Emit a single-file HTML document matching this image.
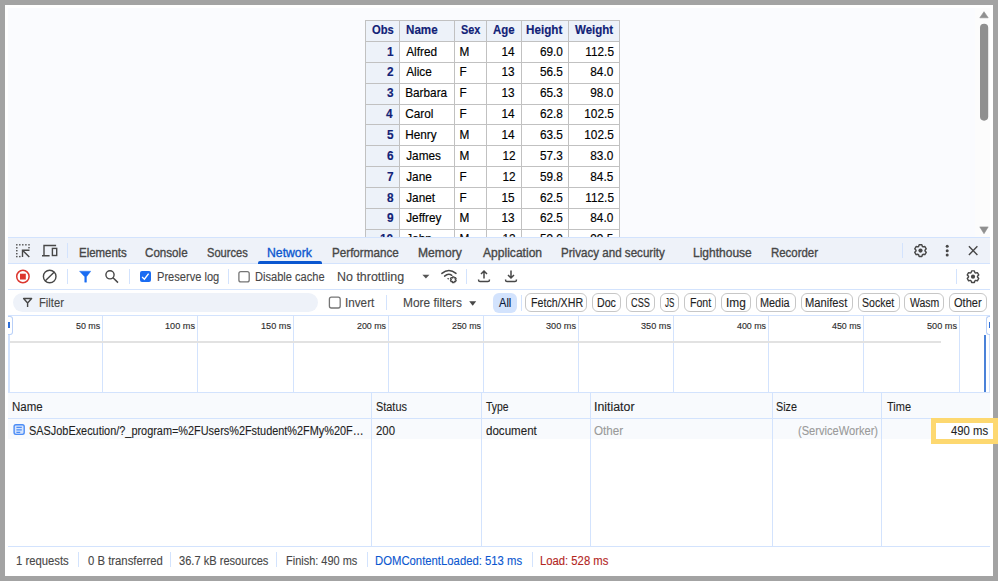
<!DOCTYPE html>
<html><head><meta charset="utf-8"><style>
html,body{margin:0;padding:0;}
body{width:998px;height:581px;position:relative;overflow:hidden;background:#a3a3a3;font-family:"Liberation Sans", sans-serif;}
body>div,body>span,body>svg{position:absolute;box-sizing:content-box;}
.t{white-space:nowrap;-webkit-text-stroke:0.12px currentColor;}
.tab{-webkit-text-stroke:0.35px currentColor;}
.s{-webkit-text-stroke:0.15px currentColor;}
.ic{overflow:visible;pointer-events:none;}
</style></head><body>
<div style="left:5px;top:5px;width:988px;height:571px;background:#fff"></div>
<div style="left:8px;top:8px;width:982px;height:229px;background:#fafbfe"></div>
<div style="left:975px;top:8px;width:15px;height:229px;background:#fcfcfc"></div>
<svg class="ic" width="998" height="581" viewBox="0 0 998 581" style="left:0;top:0"><path d="M979.8,17.8 L984,11.7 L988.2,17.8 Z" fill="#8f8f8f" stroke="#8f8f8f" stroke-width="0.6" stroke-linejoin="round"/><rect x="980" y="23.7" width="8.2" height="97" rx="4.1" fill="#8f8f8f"/><path d="M979.8,226.9 L988.2,226.9 L984,233.7 Z" fill="#8f8f8f" stroke="#8f8f8f" stroke-width="0.6" stroke-linejoin="round"/></svg>
<div style="left:365px;top:20px;width:254px;height:217px;background:#fff"></div>
<div style="left:365px;top:20px;width:254px;height:21px;background:#edf2f9"></div>
<div style="left:365px;top:41px;width:34px;height:196px;background:#edf2f9"></div>
<div style="left:365px;top:20px;width:1px;height:217px;background:#c1c1c1"></div>
<div style="left:399px;top:20px;width:1px;height:217px;background:#c1c1c1"></div>
<div style="left:454px;top:20px;width:1px;height:217px;background:#c1c1c1"></div>
<div style="left:486px;top:20px;width:1px;height:217px;background:#c1c1c1"></div>
<div style="left:521px;top:20px;width:1px;height:217px;background:#c1c1c1"></div>
<div style="left:568px;top:20px;width:1px;height:217px;background:#c1c1c1"></div>
<div style="left:619px;top:20px;width:1px;height:217px;background:#c1c1c1"></div>
<div style="left:365px;top:20px;width:255px;height:1px;background:#c1c1c1"></div>
<div style="left:365px;top:41px;width:255px;height:1px;background:#c1c1c1"></div>
<div style="left:365px;top:62px;width:255px;height:1px;background:#c1c1c1"></div>
<div style="left:365px;top:83px;width:255px;height:1px;background:#c1c1c1"></div>
<div style="left:365px;top:104px;width:255px;height:1px;background:#c1c1c1"></div>
<div style="left:365px;top:124px;width:255px;height:1px;background:#c1c1c1"></div>
<div style="left:365px;top:145px;width:255px;height:1px;background:#c1c1c1"></div>
<div style="left:365px;top:166px;width:255px;height:1px;background:#c1c1c1"></div>
<div style="left:365px;top:187px;width:255px;height:1px;background:#c1c1c1"></div>
<div style="left:365px;top:208px;width:255px;height:1px;background:#c1c1c1"></div>
<div style="left:365px;top:229px;width:255px;height:1px;background:#c1c1c1"></div>
<span class="t s" style="left:371.50px;top:25.21px;font-size:11.8px;line-height:11.8px;color:#112277;font-weight:bold;transform:scale(0.9478,1.1);transform-origin:0 9.99px;">Obs</span>
<span class="t s" style="left:405.62px;top:25.21px;font-size:11.8px;line-height:11.8px;color:#112277;font-weight:bold;transform:scale(0.9839,1.1);transform-origin:0 9.99px;">Name</span>
<span class="t s" style="left:461.00px;top:25.21px;font-size:11.8px;line-height:11.8px;color:#112277;font-weight:bold;transform:scale(0.9238,1.1);transform-origin:0 9.99px;">Sex</span>
<span class="t s" style="left:492.90px;top:25.21px;font-size:11.8px;line-height:11.8px;color:#112277;font-weight:bold;transform:scale(0.9682,1.1);transform-origin:0 9.99px;">Age</span>
<span class="t s" style="left:526.21px;top:25.21px;font-size:11.8px;line-height:11.8px;color:#112277;font-weight:bold;transform:scale(0.9889,1.1);transform-origin:0 9.99px;">Height</span>
<span class="t s" style="left:575.20px;top:25.21px;font-size:11.8px;line-height:11.8px;color:#112277;font-weight:bold;transform:scale(0.9744,1.1);transform-origin:0 9.99px;">Weight</span>
<span class="t s" style="left:387.00px;top:46.51px;font-size:11.8px;line-height:11.8px;color:#112277;font-weight:bold;transform:scale(1.0000,1.1);transform-origin:0 9.99px;">1</span>
<span class="t s" style="left:406.20px;top:46.51px;font-size:11.8px;line-height:11.8px;color:#000;font-weight:normal;transform:scale(1.0000,1.1);transform-origin:0 9.99px;">Alfred</span>
<span class="t s" style="left:459.60px;top:46.51px;font-size:11.8px;line-height:11.8px;color:#000;font-weight:normal;transform:scale(1.0000,1.1);transform-origin:0 9.99px;">M</span>
<span class="t s" style="left:501.40px;top:46.51px;font-size:11.8px;line-height:11.8px;color:#000;font-weight:normal;transform:scale(1.0000,1.1);transform-origin:0 9.99px;">14</span>
<span class="t s" style="left:539.90px;top:46.51px;font-size:11.8px;line-height:11.8px;color:#000;font-weight:normal;transform:scale(1.0000,1.1);transform-origin:0 9.99px;">69.0</span>
<span class="t s" style="left:585.30px;top:46.51px;font-size:11.8px;line-height:11.8px;color:#000;font-weight:normal;transform:scale(1.0000,1.1);transform-origin:0 9.99px;">112.5</span>
<span class="t s" style="left:387.00px;top:67.38px;font-size:11.8px;line-height:11.8px;color:#112277;font-weight:bold;transform:scale(1.0000,1.1);transform-origin:0 9.99px;">2</span>
<span class="t s" style="left:406.20px;top:67.38px;font-size:11.8px;line-height:11.8px;color:#000;font-weight:normal;transform:scale(1.0000,1.1);transform-origin:0 9.99px;">Alice</span>
<span class="t s" style="left:459.60px;top:67.38px;font-size:11.8px;line-height:11.8px;color:#000;font-weight:normal;transform:scale(1.0000,1.1);transform-origin:0 9.99px;">F</span>
<span class="t s" style="left:501.40px;top:67.38px;font-size:11.8px;line-height:11.8px;color:#000;font-weight:normal;transform:scale(1.0000,1.1);transform-origin:0 9.99px;">13</span>
<span class="t s" style="left:539.90px;top:67.38px;font-size:11.8px;line-height:11.8px;color:#000;font-weight:normal;transform:scale(1.0000,1.1);transform-origin:0 9.99px;">56.5</span>
<span class="t s" style="left:590.30px;top:67.38px;font-size:11.8px;line-height:11.8px;color:#000;font-weight:normal;transform:scale(1.0000,1.1);transform-origin:0 9.99px;">84.0</span>
<span class="t s" style="left:387.00px;top:88.25px;font-size:11.8px;line-height:11.8px;color:#112277;font-weight:bold;transform:scale(1.0000,1.1);transform-origin:0 9.99px;">3</span>
<span class="t s" style="left:405.20px;top:88.25px;font-size:11.8px;line-height:11.8px;color:#000;font-weight:normal;transform:scale(1.0000,1.1);transform-origin:0 9.99px;">Barbara</span>
<span class="t s" style="left:459.60px;top:88.25px;font-size:11.8px;line-height:11.8px;color:#000;font-weight:normal;transform:scale(1.0000,1.1);transform-origin:0 9.99px;">F</span>
<span class="t s" style="left:501.40px;top:88.25px;font-size:11.8px;line-height:11.8px;color:#000;font-weight:normal;transform:scale(1.0000,1.1);transform-origin:0 9.99px;">13</span>
<span class="t s" style="left:539.90px;top:88.25px;font-size:11.8px;line-height:11.8px;color:#000;font-weight:normal;transform:scale(1.0000,1.1);transform-origin:0 9.99px;">65.3</span>
<span class="t s" style="left:590.30px;top:88.25px;font-size:11.8px;line-height:11.8px;color:#000;font-weight:normal;transform:scale(1.0000,1.1);transform-origin:0 9.99px;">98.0</span>
<span class="t s" style="left:386.00px;top:109.12px;font-size:11.8px;line-height:11.8px;color:#112277;font-weight:bold;transform:scale(1.0000,1.1);transform-origin:0 9.99px;">4</span>
<span class="t s" style="left:405.20px;top:109.12px;font-size:11.8px;line-height:11.8px;color:#000;font-weight:normal;transform:scale(1.0000,1.1);transform-origin:0 9.99px;">Carol</span>
<span class="t s" style="left:459.60px;top:109.12px;font-size:11.8px;line-height:11.8px;color:#000;font-weight:normal;transform:scale(1.0000,1.1);transform-origin:0 9.99px;">F</span>
<span class="t s" style="left:501.40px;top:109.12px;font-size:11.8px;line-height:11.8px;color:#000;font-weight:normal;transform:scale(1.0000,1.1);transform-origin:0 9.99px;">14</span>
<span class="t s" style="left:539.90px;top:109.12px;font-size:11.8px;line-height:11.8px;color:#000;font-weight:normal;transform:scale(1.0000,1.1);transform-origin:0 9.99px;">62.8</span>
<span class="t s" style="left:584.30px;top:109.12px;font-size:11.8px;line-height:11.8px;color:#000;font-weight:normal;transform:scale(1.0000,1.1);transform-origin:0 9.99px;">102.5</span>
<span class="t s" style="left:387.00px;top:129.99px;font-size:11.8px;line-height:11.8px;color:#112277;font-weight:bold;transform:scale(1.0000,1.1);transform-origin:0 9.99px;">5</span>
<span class="t s" style="left:405.20px;top:129.99px;font-size:11.8px;line-height:11.8px;color:#000;font-weight:normal;transform:scale(1.0000,1.1);transform-origin:0 9.99px;">Henry</span>
<span class="t s" style="left:459.60px;top:129.99px;font-size:11.8px;line-height:11.8px;color:#000;font-weight:normal;transform:scale(1.0000,1.1);transform-origin:0 9.99px;">M</span>
<span class="t s" style="left:501.40px;top:129.99px;font-size:11.8px;line-height:11.8px;color:#000;font-weight:normal;transform:scale(1.0000,1.1);transform-origin:0 9.99px;">14</span>
<span class="t s" style="left:539.90px;top:129.99px;font-size:11.8px;line-height:11.8px;color:#000;font-weight:normal;transform:scale(1.0000,1.1);transform-origin:0 9.99px;">63.5</span>
<span class="t s" style="left:584.30px;top:129.99px;font-size:11.8px;line-height:11.8px;color:#000;font-weight:normal;transform:scale(1.0000,1.1);transform-origin:0 9.99px;">102.5</span>
<span class="t s" style="left:387.00px;top:150.86px;font-size:11.8px;line-height:11.8px;color:#112277;font-weight:bold;transform:scale(1.0000,1.1);transform-origin:0 9.99px;">6</span>
<span class="t s" style="left:406.20px;top:150.86px;font-size:11.8px;line-height:11.8px;color:#000;font-weight:normal;transform:scale(1.0000,1.1);transform-origin:0 9.99px;">James</span>
<span class="t s" style="left:459.60px;top:150.86px;font-size:11.8px;line-height:11.8px;color:#000;font-weight:normal;transform:scale(1.0000,1.1);transform-origin:0 9.99px;">M</span>
<span class="t s" style="left:502.40px;top:150.86px;font-size:11.8px;line-height:11.8px;color:#000;font-weight:normal;transform:scale(1.0000,1.1);transform-origin:0 9.99px;">12</span>
<span class="t s" style="left:539.90px;top:150.86px;font-size:11.8px;line-height:11.8px;color:#000;font-weight:normal;transform:scale(1.0000,1.1);transform-origin:0 9.99px;">57.3</span>
<span class="t s" style="left:590.30px;top:150.86px;font-size:11.8px;line-height:11.8px;color:#000;font-weight:normal;transform:scale(1.0000,1.1);transform-origin:0 9.99px;">83.0</span>
<span class="t s" style="left:387.00px;top:171.73px;font-size:11.8px;line-height:11.8px;color:#112277;font-weight:bold;transform:scale(1.0000,1.1);transform-origin:0 9.99px;">7</span>
<span class="t s" style="left:406.20px;top:171.73px;font-size:11.8px;line-height:11.8px;color:#000;font-weight:normal;transform:scale(1.0000,1.1);transform-origin:0 9.99px;">Jane</span>
<span class="t s" style="left:459.60px;top:171.73px;font-size:11.8px;line-height:11.8px;color:#000;font-weight:normal;transform:scale(1.0000,1.1);transform-origin:0 9.99px;">F</span>
<span class="t s" style="left:502.40px;top:171.73px;font-size:11.8px;line-height:11.8px;color:#000;font-weight:normal;transform:scale(1.0000,1.1);transform-origin:0 9.99px;">12</span>
<span class="t s" style="left:539.90px;top:171.73px;font-size:11.8px;line-height:11.8px;color:#000;font-weight:normal;transform:scale(1.0000,1.1);transform-origin:0 9.99px;">59.8</span>
<span class="t s" style="left:590.30px;top:171.73px;font-size:11.8px;line-height:11.8px;color:#000;font-weight:normal;transform:scale(1.0000,1.1);transform-origin:0 9.99px;">84.5</span>
<span class="t s" style="left:387.00px;top:192.60px;font-size:11.8px;line-height:11.8px;color:#112277;font-weight:bold;transform:scale(1.0000,1.1);transform-origin:0 9.99px;">8</span>
<span class="t s" style="left:406.20px;top:192.60px;font-size:11.8px;line-height:11.8px;color:#000;font-weight:normal;transform:scale(1.0000,1.1);transform-origin:0 9.99px;">Janet</span>
<span class="t s" style="left:459.60px;top:192.60px;font-size:11.8px;line-height:11.8px;color:#000;font-weight:normal;transform:scale(1.0000,1.1);transform-origin:0 9.99px;">F</span>
<span class="t s" style="left:501.40px;top:192.60px;font-size:11.8px;line-height:11.8px;color:#000;font-weight:normal;transform:scale(1.0000,1.1);transform-origin:0 9.99px;">15</span>
<span class="t s" style="left:539.90px;top:192.60px;font-size:11.8px;line-height:11.8px;color:#000;font-weight:normal;transform:scale(1.0000,1.1);transform-origin:0 9.99px;">62.5</span>
<span class="t s" style="left:585.30px;top:192.60px;font-size:11.8px;line-height:11.8px;color:#000;font-weight:normal;transform:scale(1.0000,1.1);transform-origin:0 9.99px;">112.5</span>
<span class="t s" style="left:387.00px;top:213.47px;font-size:11.8px;line-height:11.8px;color:#112277;font-weight:bold;transform:scale(1.0000,1.1);transform-origin:0 9.99px;">9</span>
<span class="t s" style="left:406.20px;top:213.47px;font-size:11.8px;line-height:11.8px;color:#000;font-weight:normal;transform:scale(1.0000,1.1);transform-origin:0 9.99px;">Jeffrey</span>
<span class="t s" style="left:459.60px;top:213.47px;font-size:11.8px;line-height:11.8px;color:#000;font-weight:normal;transform:scale(1.0000,1.1);transform-origin:0 9.99px;">M</span>
<span class="t s" style="left:501.40px;top:213.47px;font-size:11.8px;line-height:11.8px;color:#000;font-weight:normal;transform:scale(1.0000,1.1);transform-origin:0 9.99px;">13</span>
<span class="t s" style="left:539.90px;top:213.47px;font-size:11.8px;line-height:11.8px;color:#000;font-weight:normal;transform:scale(1.0000,1.1);transform-origin:0 9.99px;">62.5</span>
<span class="t s" style="left:590.30px;top:213.47px;font-size:11.8px;line-height:11.8px;color:#000;font-weight:normal;transform:scale(1.0000,1.1);transform-origin:0 9.99px;">84.0</span>
<span class="t s" style="left:380.00px;top:234.34px;font-size:11.8px;line-height:11.8px;color:#112277;font-weight:bold;transform:scale(1.0000,1.1);transform-origin:0 9.99px;">10</span>
<span class="t s" style="left:406.20px;top:234.34px;font-size:11.8px;line-height:11.8px;color:#000;font-weight:normal;transform:scale(1.0000,1.1);transform-origin:0 9.99px;">John</span>
<span class="t s" style="left:459.60px;top:234.34px;font-size:11.8px;line-height:11.8px;color:#000;font-weight:normal;transform:scale(1.0000,1.1);transform-origin:0 9.99px;">M</span>
<span class="t s" style="left:502.40px;top:234.34px;font-size:11.8px;line-height:11.8px;color:#000;font-weight:normal;transform:scale(1.0000,1.1);transform-origin:0 9.99px;">12</span>
<span class="t s" style="left:539.90px;top:234.34px;font-size:11.8px;line-height:11.8px;color:#000;font-weight:normal;transform:scale(1.0000,1.1);transform-origin:0 9.99px;">59.0</span>
<span class="t s" style="left:590.30px;top:234.34px;font-size:11.8px;line-height:11.8px;color:#000;font-weight:normal;transform:scale(1.0000,1.1);transform-origin:0 9.99px;">99.5</span>
<div style="left:8px;top:237px;width:982px;height:336px;background:#fff"></div>
<div style="left:8px;top:237px;width:982px;height:1px;background:#d3e3fd"></div>
<div style="left:8px;top:238px;width:982px;height:25px;background:#eef2f9"></div>
<div style="left:8px;top:263px;width:982px;height:1px;background:#d3e3fd"></div>
<span class="t tab" style="left:78.69px;top:246.53px;font-size:12.6px;line-height:12.6px;color:#474747;font-weight:normal;transform:scale(0.9098,1.0);transform-origin:0 10.67px;">Elements</span>
<span class="t tab" style="left:145.38px;top:246.53px;font-size:12.6px;line-height:12.6px;color:#474747;font-weight:normal;transform:scale(0.9222,1.0);transform-origin:0 10.67px;">Console</span>
<span class="t tab" style="left:207.12px;top:246.53px;font-size:12.6px;line-height:12.6px;color:#474747;font-weight:normal;transform:scale(0.8822,1.0);transform-origin:0 10.67px;">Sources</span>
<span class="t tab" style="left:331.57px;top:246.53px;font-size:12.6px;line-height:12.6px;color:#474747;font-weight:normal;transform:scale(0.9254,1.0);transform-origin:0 10.67px;">Performance</span>
<span class="t tab" style="left:417.64px;top:246.53px;font-size:12.6px;line-height:12.6px;color:#474747;font-weight:normal;transform:scale(0.9622,1.0);transform-origin:0 10.67px;">Memory</span>
<span class="t tab" style="left:482.80px;top:246.53px;font-size:12.6px;line-height:12.6px;color:#474747;font-weight:normal;transform:scale(0.9590,1.0);transform-origin:0 10.67px;">Application</span>
<span class="t tab" style="left:560.88px;top:246.53px;font-size:12.6px;line-height:12.6px;color:#474747;font-weight:normal;transform:scale(0.9214,1.0);transform-origin:0 10.67px;">Privacy and security</span>
<span class="t tab" style="left:693.05px;top:246.53px;font-size:12.6px;line-height:12.6px;color:#474747;font-weight:normal;transform:scale(0.9533,1.0);transform-origin:0 10.67px;">Lighthouse</span>
<span class="t tab" style="left:770.79px;top:246.53px;font-size:12.6px;line-height:12.6px;color:#474747;font-weight:normal;transform:scale(0.9078,1.0);transform-origin:0 10.67px;">Recorder</span>
<span class="t tab" style="left:267.43px;top:246.53px;font-size:12.6px;line-height:12.6px;color:#0b57d0;font-weight:normal;transform:scale(0.9711,1.0);transform-origin:0 10.67px;">Network</span>
<div style="left:258px;top:260.5px;width:64px;height:3px;background:#0b57d0;border-radius:2px 2px 0 0"></div>
<div style="left:67px;top:243px;width:1px;height:15px;background:#d3e3fd"></div>
<div style="left:902px;top:243px;width:1px;height:15px;background:#d3e3fd"></div>
<svg class="ic" width="998" height="581" viewBox="0 0 998 581" style="left:0;top:0"><rect x="16.10" y="244.10" width="1.4" height="1.4" fill="#474747"/><rect x="19.10" y="244.10" width="1.4" height="1.4" fill="#474747"/><rect x="22.10" y="244.10" width="1.4" height="1.4" fill="#474747"/><rect x="25.20" y="244.10" width="1.4" height="1.4" fill="#474747"/><rect x="28.30" y="244.10" width="1.4" height="1.4" fill="#474747"/><rect x="16.10" y="247.10" width="1.4" height="1.4" fill="#474747"/><rect x="16.10" y="250.00" width="1.4" height="1.4" fill="#474747"/><rect x="16.10" y="253.00" width="1.4" height="1.4" fill="#474747"/><rect x="16.10" y="255.90" width="1.4" height="1.4" fill="#474747"/><rect x="19.10" y="255.90" width="1.4" height="1.4" fill="#474747"/><rect x="28.30" y="247.00" width="1.4" height="1.4" fill="#474747"/><path d="M29.5,250.3 H22.5 V257 M22.5,250.3 L29.3,257" fill="none" stroke="#474747" stroke-width="1.4"/><path d="M56.1,245.5 H44 V255.7 M42,255.7 H49.6" fill="none" stroke="#474747" stroke-width="1.4"/><rect x="52.4" y="248.4" width="4.3" height="7.1" fill="none" stroke="#474747" stroke-width="1.4"/><path d="M922.75,246.70 L922.40,246.52 L921.85,244.75 L919.15,244.75 L918.60,246.52 L918.25,246.70 L917.92,246.91 L916.11,246.51 L914.76,248.85 L916.02,250.21 L916.00,250.60 L916.02,250.99 L914.76,252.35 L916.11,254.69 L917.92,254.29 L918.25,254.50 L918.60,254.68 L919.15,256.45 L921.85,256.45 L922.40,254.68 L922.75,254.50 L923.08,254.29 L924.89,254.69 L926.24,252.35 L924.98,250.99 L925.00,250.60 L924.98,250.21 L926.24,248.85 L924.89,246.51 L923.08,246.91 Z" fill="none" stroke="#474747" stroke-width="1.4" stroke-linejoin="round"/><circle cx="920.5" cy="250.6" r="2.1" fill="#474747"/><circle cx="947.2" cy="246.3" r="1.5" fill="#474747"/><circle cx="947.2" cy="250.7" r="1.5" fill="#474747"/><circle cx="947.2" cy="255.1" r="1.5" fill="#474747"/><path d="M968.9,246.3 L977.4,254.9 M977.4,246.3 L968.9,254.9" stroke="#474747" stroke-width="1.4"/></svg>
<div style="left:8px;top:289px;width:982px;height:1px;background:#d3e3fd"></div>
<div style="left:67px;top:269px;width:1px;height:15px;background:#d3e3fd"></div>
<div style="left:129px;top:269px;width:1px;height:15px;background:#d3e3fd"></div>
<div style="left:228px;top:269px;width:1px;height:15px;background:#d3e3fd"></div>
<div style="left:466px;top:269px;width:1px;height:15px;background:#d3e3fd"></div>
<div style="left:956px;top:269px;width:1px;height:15px;background:#d3e3fd"></div>
<svg class="ic" width="998" height="581" viewBox="0 0 998 581" style="left:0;top:0"><circle cx="22.9" cy="276.5" r="6.2" fill="none" stroke="#dc362e" stroke-width="1.5"/><rect x="20" y="273.7" width="5.8" height="5.8" fill="#dc362e"/><circle cx="49.7" cy="276.5" r="6.3" fill="none" stroke="#474747" stroke-width="1.4"/><path d="M54.3,271.9 L45.1,281.1" stroke="#474747" stroke-width="1.4"/><path d="M79.5,271.2 H90.8 L86.5,276.8 V282.2 H84.7 V276.8 Z" fill="#1a6cf2" stroke="#1a6cf2" stroke-width="0.4" stroke-linejoin="round"/><circle cx="110" cy="274.8" r="4.1" fill="none" stroke="#474747" stroke-width="1.4"/><path d="M113,277.8 L118,282.6" stroke="#474747" stroke-width="1.5"/><rect x="140" y="271" width="11" height="11" rx="2" fill="#1a6cf2"/><path d="M142.1,277.1 L144.4,279.2 L148.6,273.6" fill="none" stroke="#fff" stroke-width="1.4"/><rect x="238.9" y="271.6" width="10.3" height="10.3" rx="2" fill="#fff" stroke="#757575" stroke-width="1.3"/><path d="M422.4,274.7 H429.4 L425.9,278.4 Z" fill="#555"/><path d="M441.9,273.4 Q448.9,267.6 456,273.4" fill="none" stroke="#474747" stroke-width="1.5" stroke-linecap="round"/><path d="M444.6,276.1 Q448.3,272.9 451.8,275.3" fill="none" stroke="#474747" stroke-width="1.5" stroke-linecap="round"/><path d="M447.2,278 L449,278 L448.2,280 Z" fill="#474747"/><path d="M454.30,277.97 L454.18,277.90 L454.03,276.79 L452.57,276.79 L452.42,277.90 L452.30,277.97 L452.18,278.04 L451.14,277.62 L450.42,278.87 L451.30,279.56 L451.30,279.70 L451.30,279.84 L450.42,280.53 L451.14,281.78 L452.18,281.36 L452.30,281.43 L452.42,281.50 L452.57,282.61 L454.03,282.61 L454.18,281.50 L454.30,281.43 L454.42,281.36 L455.46,281.78 L456.18,280.53 L455.30,279.84 L455.30,279.70 L455.30,279.56 L456.18,278.87 L455.46,277.62 L454.42,278.04 Z" fill="none" stroke="#474747" stroke-width="1.25" stroke-linejoin="round"/><path d="M484,278.5 V271.5 M481,274 L484,271 L487,274" fill="none" stroke="#474747" stroke-width="1.5"/><path d="M478.6,279.4 V280.2 Q478.6,281.6 480,281.6 H488 Q489.4,281.6 489.4,280.2 V279.4" fill="none" stroke="#474747" stroke-width="1.5"/><path d="M511,270.5 V277.5 M508,275 L511,278 L514,275" fill="none" stroke="#474747" stroke-width="1.5"/><path d="M505.6,279.4 V280.2 Q505.6,281.6 507,281.6 H515 Q516.4,281.6 516.4,280.2 V279.4" fill="none" stroke="#474747" stroke-width="1.5"/><path d="M975.25,272.80 L974.90,272.62 L974.35,270.85 L971.65,270.85 L971.10,272.62 L970.75,272.80 L970.42,273.01 L968.61,272.61 L967.26,274.95 L968.52,276.31 L968.50,276.70 L968.52,277.09 L967.26,278.45 L968.61,280.79 L970.42,280.39 L970.75,280.60 L971.10,280.78 L971.65,282.55 L974.35,282.55 L974.90,280.78 L975.25,280.60 L975.58,280.39 L977.39,280.79 L978.74,278.45 L977.48,277.09 L977.50,276.70 L977.48,276.31 L978.74,274.95 L977.39,272.61 L975.58,273.01 Z" fill="none" stroke="#474747" stroke-width="1.4" stroke-linejoin="round"/><circle cx="973" cy="276.7" r="2.1" fill="#474747"/></svg>
<span class="t" style="left:156.58px;top:271.44px;font-size:12px;line-height:12px;color:#474747;font-weight:normal;transform:scale(0.9242,1.0);transform-origin:0 10.16px;">Preserve log</span>
<span class="t" style="left:254.78px;top:271.44px;font-size:12px;line-height:12px;color:#474747;font-weight:normal;transform:scale(0.9243,1.0);transform-origin:0 10.16px;">Disable cache</span>
<span class="t" style="left:336.56px;top:271.44px;font-size:12px;line-height:12px;color:#474747;font-weight:normal;transform:scale(1.0381,1.0);transform-origin:0 10.16px;">No throttling</span>
<div style="left:8px;top:315px;width:982px;height:1px;background:#d3e3fd"></div>
<div style="left:12.7px;top:292.8px;width:305px;height:19.2px;background:#eef2f9;border-radius:10px"></div>
<svg class="ic" width="998" height="581" viewBox="0 0 998 581" style="left:0;top:0"><path d="M23.6,298.5 H31.6 L27.6,303 Z M27.6,303 V307" fill="none" stroke="#474747" stroke-width="1.4" stroke-linejoin="round"/><rect x="329.4" y="297.2" width="10.8" height="10.8" rx="2" fill="#fff" stroke="#757575" stroke-width="1.3"/><path d="M469.2,301.2 H476.2 L472.7,305.8 Z" fill="#474747"/></svg>
<span class="t" style="left:38.77px;top:297.24px;font-size:12px;line-height:12px;color:#474747;font-weight:normal;transform:scale(0.9346,1.0);transform-origin:0 10.16px;">Filter</span>
<span class="t" style="left:345.42px;top:297.24px;font-size:12px;line-height:12px;color:#474747;font-weight:normal;transform:scale(0.9759,1.0);transform-origin:0 10.16px;">Invert</span>
<div style="left:386px;top:295px;width:1px;height:15px;background:#d3e3fd"></div>
<span class="t" style="left:403.01px;top:297.24px;font-size:12px;line-height:12px;color:#474747;font-weight:normal;transform:scale(0.9931,1.0);transform-origin:0 10.16px;">More filters</span>
<div style="left:493px;top:293px;width:23.5px;height:20px;background:#d3e3fd;border-radius:6px"></div>
<span class="t" style="left:498.50px;top:297.24px;font-size:12px;line-height:12px;color:#0a1a3a;font-weight:normal;transform:scale(0.9231,1.0);transform-origin:0 10.16px;">All</span>
<div style="left:521px;top:295px;width:1px;height:16px;background:#d3e3fd"></div>
<div style="left:525.4px;top:293.3px;width:60.0px;height:17.2px;border:1px solid #c7c7c7;border-radius:6px;background:#fff"></div>
<span class="t" style="left:530.51px;top:297.24px;font-size:12px;line-height:12px;color:#1f1f1f;font-weight:normal;transform:scale(0.8877,1.0);transform-origin:0 10.16px;">Fetch/XHR</span>
<div style="left:591.8px;top:293.3px;width:27.2px;height:17.2px;border:1px solid #c7c7c7;border-radius:6px;background:#fff"></div>
<span class="t" style="left:596.72px;top:297.24px;font-size:12px;line-height:12px;color:#1f1f1f;font-weight:normal;transform:scale(0.8850,1.0);transform-origin:0 10.16px;">Doc</span>
<div style="left:626.2px;top:293.3px;width:26.7px;height:17.2px;border:1px solid #c7c7c7;border-radius:6px;background:#fff"></div>
<span class="t" style="left:630.63px;top:297.24px;font-size:12px;line-height:12px;color:#1f1f1f;font-weight:normal;transform:scale(0.7652,1.0);transform-origin:0 10.16px;">CSS</span>
<div style="left:660.3px;top:293.3px;width:16.7px;height:17.2px;border:1px solid #c7c7c7;border-radius:6px;background:#fff"></div>
<span class="t" style="left:664.80px;top:297.24px;font-size:12px;line-height:12px;color:#1f1f1f;font-weight:normal;transform:scale(0.6714,1.0);transform-origin:0 10.16px;">JS</span>
<div style="left:684.3px;top:293.3px;width:30.1px;height:17.2px;border:1px solid #c7c7c7;border-radius:6px;background:#fff"></div>
<span class="t" style="left:689.72px;top:297.24px;font-size:12px;line-height:12px;color:#1f1f1f;font-weight:normal;transform:scale(0.8826,1.0);transform-origin:0 10.16px;">Font</span>
<div style="left:721.2px;top:293.3px;width:27.4px;height:17.2px;border:1px solid #c7c7c7;border-radius:6px;background:#fff"></div>
<span class="t" style="left:726.11px;top:297.24px;font-size:12px;line-height:12px;color:#1f1f1f;font-weight:normal;transform:scale(0.9889,1.0);transform-origin:0 10.16px;">Img</span>
<div style="left:755.7px;top:293.3px;width:38.1px;height:17.2px;border:1px solid #c7c7c7;border-radius:6px;background:#fff"></div>
<span class="t" style="left:760.09px;top:297.24px;font-size:12px;line-height:12px;color:#1f1f1f;font-weight:normal;transform:scale(0.9062,1.0);transform-origin:0 10.16px;">Media</span>
<div style="left:800.6px;top:293.3px;width:50.4px;height:17.2px;border:1px solid #c7c7c7;border-radius:6px;background:#fff"></div>
<span class="t" style="left:805.37px;top:297.24px;font-size:12px;line-height:12px;color:#1f1f1f;font-weight:normal;transform:scale(0.9318,1.0);transform-origin:0 10.16px;">Manifest</span>
<div style="left:858.1px;top:293.3px;width:39.5px;height:17.2px;border:1px solid #c7c7c7;border-radius:6px;background:#fff"></div>
<span class="t" style="left:862.02px;top:297.24px;font-size:12px;line-height:12px;color:#1f1f1f;font-weight:normal;transform:scale(0.8778,1.0);transform-origin:0 10.16px;">Socket</span>
<div style="left:904.4px;top:293.3px;width:37.3px;height:17.2px;border:1px solid #c7c7c7;border-radius:6px;background:#fff"></div>
<span class="t" style="left:910.30px;top:297.24px;font-size:12px;line-height:12px;color:#1f1f1f;font-weight:normal;transform:scale(0.8727,1.0);transform-origin:0 10.16px;">Wasm</span>
<div style="left:948.6px;top:293.3px;width:36.3px;height:17.2px;border:1px solid #c7c7c7;border-radius:6px;background:#fff"></div>
<span class="t" style="left:953.88px;top:297.24px;font-size:12px;line-height:12px;color:#1f1f1f;font-weight:normal;transform:scale(0.9207,1.0);transform-origin:0 10.16px;">Other</span>
<div style="left:8px;top:392px;width:982px;height:1px;background:#d3e3fd"></div>
<div style="left:102px;top:316px;width:1px;height:76px;background:#d3e3fd"></div>
<div style="left:197px;top:316px;width:1px;height:76px;background:#d3e3fd"></div>
<div style="left:293px;top:316px;width:1px;height:76px;background:#d3e3fd"></div>
<div style="left:388px;top:316px;width:1px;height:76px;background:#d3e3fd"></div>
<div style="left:483px;top:316px;width:1px;height:76px;background:#d3e3fd"></div>
<div style="left:578px;top:316px;width:1px;height:76px;background:#d3e3fd"></div>
<div style="left:673px;top:316px;width:1px;height:76px;background:#d3e3fd"></div>
<div style="left:768px;top:316px;width:1px;height:76px;background:#d3e3fd"></div>
<div style="left:863px;top:316px;width:1px;height:76px;background:#d3e3fd"></div>
<div style="left:959px;top:316px;width:1px;height:76px;background:#d3e3fd"></div>
<div style="left:8px;top:316px;width:1.5px;height:76px;background:#d3e3fd"></div>
<div style="left:989px;top:316px;width:1px;height:76px;background:#d3e3fd"></div>
<span class="t s" style="left:75.56px;top:320.96px;font-size:9.5px;line-height:9.5px;color:#303030;font-weight:normal;transform:scale(0.9360,1.0);transform-origin:0 8.04px;">50 ms</span>
<span class="t s" style="left:165.04px;top:320.96px;font-size:9.5px;line-height:9.5px;color:#303030;font-weight:normal;transform:scale(0.9633,1.0);transform-origin:0 8.04px;">100 ms</span>
<span class="t s" style="left:261.04px;top:320.96px;font-size:9.5px;line-height:9.5px;color:#303030;font-weight:normal;transform:scale(0.9633,1.0);transform-origin:0 8.04px;">150 ms</span>
<span class="t s" style="left:357.00px;top:320.96px;font-size:9.5px;line-height:9.5px;color:#303030;font-weight:normal;transform:scale(0.9323,1.0);transform-origin:0 8.04px;">200 ms</span>
<span class="t s" style="left:452.00px;top:320.96px;font-size:9.5px;line-height:9.5px;color:#303030;font-weight:normal;transform:scale(0.9323,1.0);transform-origin:0 8.04px;">250 ms</span>
<span class="t s" style="left:546.04px;top:320.96px;font-size:9.5px;line-height:9.5px;color:#303030;font-weight:normal;transform:scale(0.9633,1.0);transform-origin:0 8.04px;">300 ms</span>
<span class="t s" style="left:641.04px;top:320.96px;font-size:9.5px;line-height:9.5px;color:#303030;font-weight:normal;transform:scale(0.9633,1.0);transform-origin:0 8.04px;">350 ms</span>
<span class="t s" style="left:737.00px;top:320.96px;font-size:9.5px;line-height:9.5px;color:#303030;font-weight:normal;transform:scale(0.9323,1.0);transform-origin:0 8.04px;">400 ms</span>
<span class="t s" style="left:832.00px;top:320.96px;font-size:9.5px;line-height:9.5px;color:#303030;font-weight:normal;transform:scale(0.9323,1.0);transform-origin:0 8.04px;">450 ms</span>
<span class="t s" style="left:927.04px;top:320.96px;font-size:9.5px;line-height:9.5px;color:#303030;font-weight:normal;transform:scale(0.9633,1.0);transform-origin:0 8.04px;">500 ms</span>
<div style="left:10px;top:340.5px;width:931px;height:2px;background:#e2e2e2"></div>
<div style="left:984px;top:335px;width:2px;height:57px;background:#4b82d8"></div>
<div style="left:8px;top:316px;width:3.5px;height:16.5px;border:1px solid #b9d0f8;border-left:none;border-radius:0 3px 3px 0;background:#fff"></div>
<div style="left:8.3px;top:322px;width:1.8px;height:6px;background:#2f6fd8"></div>
<div style="left:986px;top:316px;width:3px;height:16.5px;border:1px solid #b9d0f8;border-right:none;border-radius:3px 0 0 3px;background:#fff"></div>
<div style="left:988.5px;top:322px;width:1.8px;height:6px;background:#2f6fd8"></div>
<div style="left:8px;top:393px;width:982px;height:25px;background:#f8fafd"></div>
<div style="left:8px;top:418px;width:982px;height:1px;background:#d3e3fd"></div>
<div style="left:8px;top:419px;width:982px;height:20px;background:#f8fafd"></div>
<div style="left:371px;top:393px;width:1px;height:153px;background:#d3e3fd"></div>
<div style="left:481px;top:393px;width:1px;height:153px;background:#d3e3fd"></div>
<div style="left:590px;top:393px;width:1px;height:153px;background:#d3e3fd"></div>
<div style="left:772px;top:393px;width:1px;height:153px;background:#d3e3fd"></div>
<div style="left:881px;top:393px;width:1px;height:153px;background:#d3e3fd"></div>
<span class="t" style="left:11.84px;top:401.04px;font-size:12px;line-height:12px;color:#1f1f1f;font-weight:normal;transform:scale(0.9581,1.0);transform-origin:0 10.16px;">Name</span>
<span class="t" style="left:375.79px;top:401.04px;font-size:12px;line-height:12px;color:#1f1f1f;font-weight:normal;transform:scale(0.9091,1.0);transform-origin:0 10.16px;">Status</span>
<span class="t" style="left:486.40px;top:401.04px;font-size:12px;line-height:12px;color:#1f1f1f;font-weight:normal;transform:scale(0.8654,1.0);transform-origin:0 10.16px;">Type</span>
<span class="t" style="left:593.87px;top:401.04px;font-size:12px;line-height:12px;color:#1f1f1f;font-weight:normal;transform:scale(1.0289,1.0);transform-origin:0 10.16px;">Initiator</span>
<span class="t" style="left:775.80px;top:401.04px;font-size:12px;line-height:12px;color:#1f1f1f;font-weight:normal;transform:scale(0.9000,1.0);transform-origin:0 10.16px;">Size</span>
<span class="t" style="left:886.90px;top:401.04px;font-size:12px;line-height:12px;color:#1f1f1f;font-weight:normal;transform:scale(0.9154,1.0);transform-origin:0 10.16px;">Time</span>
<svg class="ic" width="998" height="581" viewBox="0 0 998 581" style="left:0;top:0"><rect x="14.1" y="424.7" width="10.1" height="9.7" rx="1.8" fill="#d6e4fc" stroke="#4c8df6" stroke-width="1.4"/><path d="M16.4,427.4 H21.8 M16.4,429.8 H21.8 M16.4,432.3 H20.2" stroke="#4c8df6" stroke-width="1.2"/></svg>
<span class="t" style="left:29.19px;top:425.04px;font-size:12px;line-height:12px;color:#1f1f1f;font-weight:normal;transform:scale(0.9082,1.0);transform-origin:0 10.16px;">SASJobExecution/?_program=%2FUsers%2Fstudent%2FMy%20F…</span>
<span class="t" style="left:375.75px;top:425.04px;font-size:12px;line-height:12px;color:#1f1f1f;font-weight:normal;transform:scale(0.9474,1.0);transform-origin:0 10.16px;">200</span>
<span class="t" style="left:486.40px;top:425.04px;font-size:12px;line-height:12px;color:#1f1f1f;font-weight:normal;transform:scale(0.9642,1.0);transform-origin:0 10.16px;">document</span>
<span class="t" style="left:593.93px;top:425.04px;font-size:12px;line-height:12px;color:#9a9a9a;font-weight:normal;transform:scale(0.9724,1.0);transform-origin:0 10.16px;">Other</span>
<span class="t" style="left:797.67px;top:425.04px;font-size:12px;line-height:12px;color:#9a9a9a;font-weight:normal;transform:scale(0.9259,1.0);transform-origin:0 10.16px;">(ServiceWorker)</span>
<div style="left:931px;top:418px;width:57px;height:16px;border:5px solid #fdd870;background:#fff"></div>
<span class="t" style="left:950.90px;top:425.04px;font-size:12px;line-height:12px;color:#1f1f1f;font-weight:normal;transform:scale(0.9410,1.0);transform-origin:0 10.16px;">490 ms</span>
<div style="left:8px;top:546px;width:982px;height:1px;background:#d3e3fd"></div>
<div style="left:78px;top:552px;width:1px;height:15px;background:#d3e3fd"></div>
<div style="left:170px;top:552px;width:1px;height:15px;background:#d3e3fd"></div>
<div style="left:276px;top:552px;width:1px;height:15px;background:#d3e3fd"></div>
<div style="left:367px;top:552px;width:1px;height:15px;background:#d3e3fd"></div>
<div style="left:532px;top:552px;width:1px;height:15px;background:#d3e3fd"></div>
<span class="t" style="left:16.46px;top:555.04px;font-size:12px;line-height:12px;color:#474747;font-weight:normal;transform:scale(0.9400,1.0);transform-origin:0 10.16px;">1 requests</span>
<span class="t" style="left:87.80px;top:555.04px;font-size:12px;line-height:12px;color:#474747;font-weight:normal;transform:scale(0.9430,1.0);transform-origin:0 10.16px;">0 B transferred</span>
<span class="t" style="left:179.38px;top:555.04px;font-size:12px;line-height:12px;color:#474747;font-weight:normal;transform:scale(0.9242,1.0);transform-origin:0 10.16px;">36.7 kB resources</span>
<span class="t" style="left:286.09px;top:555.04px;font-size:12px;line-height:12px;color:#474747;font-weight:normal;transform:scale(0.9130,1.0);transform-origin:0 10.16px;">Finish: 490 ms</span>
<span class="t" style="left:375.46px;top:555.04px;font-size:12px;line-height:12px;color:#0b57d0;font-weight:normal;transform:scale(0.9426,1.0);transform-origin:0 10.16px;">DOMContentLoaded: 513 ms</span>
<span class="t" style="left:540.36px;top:555.04px;font-size:12px;line-height:12px;color:#b3261e;font-weight:normal;transform:scale(0.9394,1.0);transform-origin:0 10.16px;">Load: 528 ms</span>
</body></html>
